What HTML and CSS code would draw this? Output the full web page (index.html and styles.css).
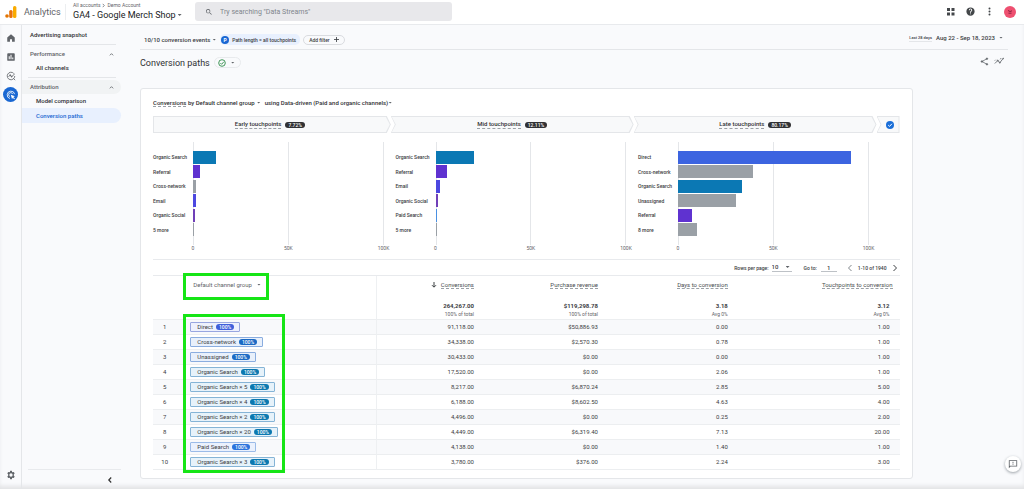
FILE: index.html
```html
<!DOCTYPE html>
<html lang="en">
<head>
<meta charset="utf-8">
<meta name="viewport" content="width=device-width, initial-scale=1">
<title>Analytics - Conversion paths</title>
<link rel="stylesheet" href="styles.css">
</head>
<body>
<header class="topbar">
  <a class="brand" href="#">
    <svg class="logo" viewBox="0 0 12 12" aria-hidden="true"><rect x="8" y="0" width="3.4" height="12" rx="1.6" fill="#f9ab00"/><rect x="4.2" y="4" width="3.4" height="8" rx="1.6" fill="#e8710a"/><circle cx="2" cy="10" r="1.8" fill="#e37400"/></svg>
    <span>Analytics</span>
  </a>
  <div class="account">
    <nav class="crumbs" aria-label="Account"><a href="#">All accounts</a><svg class="crumb-arrow" viewBox="0 0 4 6" aria-hidden="true"><path d="M1 .8 3 3 1 5.2"/></svg><a href="#">Demo Account</a></nav>
    <button class="property" type="button">GA4 - Google Merch Shop<i class="caret"></i></button>
  </div>
  <label class="search">
    <svg class="icon-8" viewBox="0 0 24 24" aria-hidden="true"><path d="M15.500 14h-.8l-.3-.3A6.500 6.500 0 1 0 13.700 14.400l.3.3v.8l5 5 1.500-1.500zM9.500 14a4.500 4.500 0 1 1 0-9 4.500 4.500 0 0 1 0 9z"/></svg>
    <input type="search" placeholder="Try searching &quot;Data Streams&quot;" aria-label="Search">
  </label>
  <div class="top-actions">
    <button type="button" aria-label="Apps"><svg class="icon-9" viewBox="0 0 9 9"><path d="M1 1h3v3H1zM5.500 1h3v3h-3zM1 5.500h3v3H1zM5.500 5.500h3v3h-3z"/></svg></button>
    <button type="button" aria-label="Help"><svg class="icon-9" viewBox="0 0 24 24"><path d="M12 1a11 11 0 1 0 0 22 11 11 0 0 0 0-22zm1.200 18.500h-2.400V17h2.400zm2.300-8.600-1 1c-.9.9-1.300 1.500-1.300 3.200h-2.400v-.6c0-1.300.5-2.400 1.300-3.200l1.400-1.400c.4-.4.6-.9.6-1.500a2.100 2.100 0 0 0-4.200 0H7.500a4.500 4.500 0 0 1 9 0c0 1-.4 1.900-1 2.500z"/></svg></button>
    <button type="button" aria-label="More"><svg class="icon-9" viewBox="0 0 9 9"><circle cx="4.500" cy="1.500" r="1"/><circle cx="4.500" cy="4.500" r="1"/><circle cx="4.500" cy="7.500" r="1"/></svg></button>
    <button class="avatar" type="button" aria-label="Profile"><svg viewBox="0 0 12 12"><path d="M4 4.500 6 5.500l2-.7M4.500 7.200h3" fill="none" stroke="#8c2340" stroke-width="1"/></svg></button>
  </div>
</header>

<div class="shell">
  <nav class="rail" aria-label="Sections">
    <a href="#" aria-label="Home"><svg class="icon-10" viewBox="0 0 24 24"><path d="M3 10.500 12 3l9 7.500V21h-6.500v-6h-5v6H3z"/></svg></a>
    <a href="#" aria-label="Reports"><svg class="icon-10" viewBox="0 0 24 24"><path fill-rule="evenodd" d="M5 3h14a2 2 0 0 1 2 2v14a2 2 0 0 1-2 2H5a2 2 0 0 1-2-2V5a2 2 0 0 1 2-2zm1.500 7v7.500H9V10zm4.200-3.500v11h2.600v-11zM15 13v4.500h2.500V13z"/></svg></a>
    <a href="#" aria-label="Explore"><svg class="icon-10 line" viewBox="0 0 24 24"><path d="M21 12a9 9 0 1 1-2.500-6.200M18 18l4 4M6 14l4-4 3.500 3.500L21 7"/><circle cx="10" cy="10" r="1.200"/><circle cx="13.500" cy="13.500" r="1.200"/></svg></a>
    <a class="active" href="#" aria-label="Advertising"><svg class="icon-10 line" viewBox="0 0 24 24"><path d="M9.500 20.500A9 9 0 1 1 20.700 10M9.500 16A5 5 0 1 1 16 9.500"/><path d="m11.500 11.500 10 3.500-4 1.800 4 4-1.500 1.500-4-4L14.500 22z" fill="currentColor" stroke="none"/></svg></a>
    <a class="settings" href="#" aria-label="Admin"><svg class="icon-10" viewBox="0 0 24 24"><path fill-rule="evenodd" d="m10 2-.6 2.700-1.600.9L5.200 4.700l-2 3.500 2 1.900v1.900 1.900l-2 1.900 2 3.500 2.600-.9 1.600.9L10 22h4l.6-2.700 1.600-.9 2.600.9 2-3.500-2-1.900v-3.800l2-1.900-2-3.500-2.600.9-1.600-.9L14 2zm2 6a4 4 0 1 1 0 8 4 4 0 0 1 0-8z"/></svg></a>
  </nav>

  <nav class="sidebar" aria-label="Advertising">
    <a class="side-item top" href="#">Advertising snapshot</a>
    <div class="side-group">
      <button class="side-head" type="button">Performance<svg class="icon-5 line" viewBox="0 0 6 6"><path d="m1 4 2-2 2 2"/></svg></button>
      <a class="side-item" href="#">All channels</a>
    </div>
    <div class="side-group">
      <button class="side-head shaded" type="button">Attribution<svg class="icon-5 line" viewBox="0 0 6 6"><path d="m1 4 2-2 2 2"/></svg></button>
      <a class="side-item" href="#">Model comparison</a>
      <a class="side-item current" href="#">Conversion paths</a>
    </div>
    <button class="collapse" type="button" aria-label="Collapse"><svg class="icon-8" viewBox="0 0 8 8"><path d="M5.200 1.500 2.800 4l2.400 2.500" fill="none" stroke="#333" stroke-width="1.200"/></svg></button>
  </nav>

  <main class="main">
    <div class="filters">
      <button class="plain" type="button">10/10 conversion events<i class="caret"></i></button>
      <button class="filter-chip" type="button"><b class="dot">P</b>Path length = all touchpoints</button>
      <button class="add-filter" type="button">Add filter<svg class="icon-5 line" viewBox="0 0 6 6"><path d="M3 0v6M0 3h6"/></svg></button>
      <button class="dates" type="button"><span class="range">Last 28 days</span>Aug 22 - Sep 18, 2023<i class="caret"></i></button>
    </div>
    <div class="title-row">
      <h1>Conversion paths</h1>
      <button class="status" type="button" aria-label="Data quality"><svg class="icon-8" viewBox="0 0 8 8"><circle cx="4" cy="4" r="3.300" fill="none" stroke="#2e8b47" stroke-width=".9"/><path d="m2.400 4.100 1.200 1.200 2.200-2.500" fill="none" stroke="#2e8b47" stroke-width=".9"/></svg><i class="caret"></i></button>
      <div class="title-actions">
        <button type="button" aria-label="Share"><svg class="icon-9 line" viewBox="0 0 24 24"><path d="M18 5 5 12l13 7"/><circle cx="18.500" cy="4.500" r="2" fill="currentColor"/><circle cx="5" cy="12" r="2" fill="currentColor"/><circle cx="18.500" cy="19.500" r="2" fill="currentColor"/></svg></button>
        <button type="button" aria-label="Insights"><svg class="icon-10 line" viewBox="0 0 24 24"><path d="m2 18 7-7 5 5 8-10M2 11l2-2M15 8l2-3"/><circle cx="9" cy="11" r="1.300"/><circle cx="14" cy="16" r="1.300"/><circle cx="22" cy="6" r="1"/></svg></button>
      </div>
    </div>

    <section class="card">
      <div class="card-title">
        <p><span class="dotted">Conversions</span> by Default channel group</p><i class="caret"></i>
        <p class="model">using Data-driven (Paid and organic channels)</p><i class="caret"></i>
      </div>

      <div class="steps">
        <div class="step first"><span class="dotted">Early touchpoints</span><b class="share">7.72%</b></div>
        <div class="step"><span class="dotted">Mid touchpoints</span><b class="share">12.11%</b></div>
        <div class="step"><span class="dotted">Late touchpoints</span><b class="share">80.17%</b></div>
        <div class="step last"><svg class="icon-8" viewBox="0 0 8 8" role="img" aria-label="Conversion"><circle cx="4" cy="4" r="4" fill="#1b6fd8"/><path d="m2.200 4.100 1.300 1.300 2.400-2.600" fill="none" stroke="#fff"/></svg></div>
      </div>

      <div class="charts">
        <div class="chart">
          <ul class="names"><li>Organic Search</li><li>Referral</li><li>Cross-network</li><li>Email</li><li>Organic Social</li><li>5 more</li></ul>
          <div class="plot"><i class="bar organic" style="width:12.3%"></i><i class="bar referral" style="width:3.5%"></i><i class="bar other" style="width:1.6%"></i><i class="bar email" style="width:1.4%"></i><i class="bar social" style="width:1%"></i><i class="bar other" style="width:.6%"></i></div>
          <div class="axis"><span>0</span><span>50K</span><span>100K</span></div>
        </div>
        <div class="chart">
          <ul class="names"><li>Organic Search</li><li>Referral</li><li>Email</li><li>Organic Social</li><li>Paid Search</li><li>5 more</li></ul>
          <div class="plot"><i class="bar organic" style="width:20.2%"></i><i class="bar referral" style="width:6%"></i><i class="bar email" style="width:2.4%"></i><i class="bar social" style="width:1.4%"></i><i class="bar paid" style="width:.9%"></i><i class="bar other" style="width:1%"></i></div>
          <div class="axis"><span>0</span><span>50K</span><span>100K</span></div>
        </div>
        <div class="chart">
          <ul class="names"><li>Direct</li><li>Cross-network</li><li>Organic Search</li><li>Unassigned</li><li>Referral</li><li>8 more</li></ul>
          <div class="plot"><i class="bar direct" style="width:91%"></i><i class="bar other" style="width:39.2%"></i><i class="bar organic" style="width:33.7%"></i><i class="bar other" style="width:30.5%"></i><i class="bar referral" style="width:7.3%"></i><i class="bar other" style="width:10.1%"></i></div>
          <div class="axis"><span>0</span><span>50K</span><span>100K</span></div>
        </div>
      </div>

      <div class="pager">
        <label for="rows">Rows per page:</label>
        <span class="select"><select id="rows"><option>10</option><option>25</option></select><i class="caret"></i></span>
        <label class="goto" for="page">Go to:</label>
        <input id="page" type="text" value="1">
        <button type="button" class="prev" aria-label="Previous page"><svg class="icon-8" viewBox="0 0 8 8"><path d="M5.500 1 2.500 4l3 3"/></svg></button>
        <span class="count">1-10 of 1940</span>
        <button type="button" class="next" aria-label="Next page"><svg class="icon-8" viewBox="0 0 8 8"><path d="m2.500 1 3 3-3 3"/></svg></button>
      </div>

      <div class="table-wrap">
        <table>
          <colgroup><col class="c-num"><col class="c-group"><col class="c-conv"><col class="c-rev"><col class="c-days"><col class="c-touch"></colgroup>
          <thead>
            <tr class="labels"><th></th><th class="group"><button class="dimension" type="button">Default channel group<i class="caret"></i></button></th><th><svg class="sort" viewBox="0 0 6 6" aria-hidden="true"><path d="M3 0v5M1 3.200l2 2 2-2"/></svg><span class="dotted">Conversions</span></th><th><span class="dotted">Purchase revenue</span></th><th><span class="dotted">Days to conversion</span></th><th><span class="dotted">Touchpoints to conversion</span></th></tr>
            <tr class="totals"><td></td><td class="group"></td><td><b>264,267.00</b><small>100% of total</small></td><td><b>$119,298.78</b><small>100% of total</small></td><td><b>3.18</b><small>Avg 0%</small></td><td><b>3.12</b><small>Avg 0%</small></td></tr>
          </thead>
          <tbody>
            <tr><td>1</td><td class="group"><span class="path direct">Direct<b>100%</b></span></td><td>91,118.00</td><td>$50,886.93</td><td>0.00</td><td>1.00</td></tr>
            <tr><td>2</td><td class="group"><span class="path cross">Cross-network<b>100%</b></span></td><td>34,338.00</td><td>$2,570.30</td><td>0.78</td><td>1.00</td></tr>
            <tr><td>3</td><td class="group"><span class="path cross">Unassigned<b>100%</b></span></td><td>30,433.00</td><td>$0.00</td><td>0.00</td><td>1.00</td></tr>
            <tr><td>4</td><td class="group"><span class="path">Organic Search<b>100%</b></span></td><td>17,520.00</td><td>$0.00</td><td>2.06</td><td>1.00</td></tr>
            <tr><td>5</td><td class="group"><span class="path">Organic Search × 5<b>100%</b></span></td><td>8,217.00</td><td>$6,870.24</td><td>2.85</td><td>5.00</td></tr>
            <tr><td>6</td><td class="group"><span class="path">Organic Search × 4<b>100%</b></span></td><td>6,188.00</td><td>$8,602.50</td><td>4.63</td><td>4.00</td></tr>
            <tr><td>7</td><td class="group"><span class="path">Organic Search × 2<b>100%</b></span></td><td>4,496.00</td><td>$0.00</td><td>0.25</td><td>2.00</td></tr>
            <tr><td>8</td><td class="group"><span class="path">Organic Search × 20<b>100%</b></span></td><td>4,449.00</td><td>$6,319.40</td><td>7.13</td><td>20.00</td></tr>
            <tr><td>9</td><td class="group"><span class="path paid">Paid Search<b>100%</b></span></td><td>4,138.00</td><td>$0.00</td><td>1.40</td><td>1.00</td></tr>
            <tr><td>10</td><td class="group"><span class="path">Organic Search × 3<b>100%</b></span></td><td>3,780.00</td><td>$376.00</td><td>2.24</td><td>3.00</td></tr>
          </tbody>
        </table>
        <div class="highlight highlight-dimension"></div>
        <div class="highlight highlight-paths"></div>
      </div>
    </section>
  </main>
</div>
<button class="feedback" type="button" aria-label="Send feedback"><svg class="icon-10" viewBox="0 0 24 24"><path fill-rule="evenodd" d="M2 3h20v15H6l-4 4zm2 2v12l1-1h15V5zM11 6.500h2V11h-2zM11 12.500h2v2h-2z"/></svg></button>
</body>
</html>
```
FILE: styles.css
```css
* { box-sizing: border-box; }
body {
  margin: 0;
  min-height: 100vh;
  display: flex;
  flex-direction: column;
  background: #f9fafc;
  box-shadow: inset 0 -4px 4px -1px #e2e3e5;
  color: #3c4043;
  font: 500 6px/8px Roboto, "Liberation Sans", sans-serif;
}
button, input, select { font: inherit; color: inherit; border: 0; background: none; padding: 0; margin: 0; }
button { display: inline-flex; align-items: center; cursor: pointer; }
a { color: inherit; text-decoration: none; }
svg { display: block; flex: none; fill: currentColor; }
ul, p, h1 { margin: 0; padding: 0; list-style: none; font-weight: inherit; }
.line { fill: none; stroke: currentColor; stroke-width: 2; }
.icon-5 { width: 5px; height: 5px; }
.icon-5.line { stroke-width: 1; }
.icon-8 { width: 8px; height: 8px; }
.icon-9 { width: 9px; height: 9px; }
.icon-10 { width: 10px; height: 10px; }
.caret { width: 4px; height: 2px; flex: none; background: #5f6368; clip-path: polygon(0 0, 100% 0, 50% 100%); }
.dotted { border-bottom: 1px dashed #9aa0a6; }

/* Top bar */
.topbar { display: flex; align-items: center; height: 25px; background: #fff; border-bottom: 1px solid #e8eaed; padding: 0 8px 1px 5px; }
.brand { display: flex; align-items: center; gap: 7px; width: 61px; height: 16px; border-right: 1px solid #eceef0; font: 400 9px/12px Roboto, sans-serif; color: #5f6368; }
.logo { width: 12px; height: 12px; }
.account { width: 129px; padding-left: 7px; }
.crumbs { display: flex; align-items: center; gap: 2px; font: 400 5px/7px Roboto, sans-serif; color: #5f6368; }
.crumb-arrow { width: 3px; height: 5px; fill: none; stroke: #5f6368; }
.property { gap: 2px; font: 400 9px/12px Roboto, sans-serif; color: #202124; white-space: nowrap; }
.search { display: flex; align-items: center; gap: 7px; width: 257px; height: 19px; padding: 0 10px; border-radius: 3px; background: #e8e8eb; color: #5f6368; }
.search input { flex: 1; min-width: 0; outline: 0; font: 400 7px/10px Roboto, sans-serif; }
.search input::placeholder { color: #80868b; opacity: 1; }
.top-actions { display: flex; align-items: center; gap: 10px; margin-left: auto; color: #44474a; }
.top-actions button:first-child { margin-right: 1px; }
.avatar { width: 12px; height: 12px; border-radius: 50%; background: #ee5070; }

/* Shell */
.shell { flex: 1; display: grid; grid-template-columns: 22px 99px minmax(0, 1fr); }
.rail { display: flex; flex-direction: column; align-items: center; gap: 4px; padding: 5px 0 7px; border-right: 1px solid #e4e6e9; color: #5f6368; }
.rail a { display: grid; place-items: center; width: 15px; height: 15px; border-radius: 50%; }
.rail .active { background: #1967d2; color: #fff; }
.rail .settings { margin-top: auto; }
.sidebar { display: flex; flex-direction: column; padding-top: 3px; }
.side-item { display: flex; align-items: center; height: 14px; padding-left: 14px; border-radius: 0 8px 8px 0; color: #303134; }
.side-item.top { padding-left: 8px; }
.side-item.current { height: 15px; background: #e8f0fe; color: #1967d2; }
.side-group { padding-top: 2px; }
.side-group::before { content: ""; display: block; height: 1px; margin: 0 5px 2px 6px; background: #e4e6e9; }
.side-head { width: 100%; height: 14px; padding: 0 7px 0 8px; justify-content: space-between; color: #5f6368; border-radius: 0 8px 8px 0; }
.side-head.shaded { background: #f1f3f4; }
.collapse { margin: auto 0 0 6px; height: 20px; border-top: 1px solid #e8eaed; justify-content: flex-end; padding-right: 7px; }

/* Main column */
.main { padding: 0 16px 9px 19px; }
.filters { display: flex; align-items: center; height: 25px; padding: 5px 5px 0 4px; border-bottom: 1px solid #e4e6e9; }
.plain { gap: 2px; }
.filter-chip { gap: 3px; height: 11px; margin-left: 4px; padding: 0 4px 0 1px; border-radius: 5px; background: #e8f0fe; font-size: 5px; }
.dot { display: grid; place-items: center; width: 8px; height: 8px; border-radius: 50%; background: #1967d2; color: #fff; font-size: 5px; line-height: 8px; }
.add-filter { gap: 4px; height: 10px; margin-left: 3px; padding: 0 5px; border: 1px solid #dadce0; border-radius: 5px; font-size: 5px; }
.dates { gap: 4px; margin: 0 0 4px auto; }
.range { font-size: 4px; line-height: 7px; border-bottom: 1px solid #e4e6e9; }
.title-row { display: flex; align-items: center; height: 25px; }
.title-row h1 { font: 400 9px/12px Roboto, sans-serif; color: #303134; }
.status { gap: 5px; height: 11px; margin-left: 4px; padding: 0 5px 0 3px; border: 1px solid #e8eaed; border-radius: 6px; }
.title-actions { display: flex; gap: 5px; margin: 0 4px 3px auto; color: #5f6368; }

/* Card */
.card { width: 89%; margin-top: 13px; padding: 9px 12px 8px; border: 1px solid #e4e6e9; border-radius: 3px; background: #fff; }
.card-title { display: flex; align-items: center; height: 9px; color: #303134; }
.card-title .caret { margin-left: 2px; }
.card-title .model { margin-left: 4px; }
.card-title .model + .caret { margin-left: 0; }
.steps { display: grid; grid-template-columns: 238fr 243fr 243fr 23px; margin-top: 9px; }
.step { position: relative; z-index: 0; display: flex; align-items: center; justify-content: center; gap: 4px; height: 17px; background: #e4e6e9; --shape: polygon(0 0, calc(100% - 4px) 0, 100% 50%, calc(100% - 4px) 100%, 0 100%, 4px 50%); clip-path: var(--shape); color: #303134; }
.step::before { content: ""; position: absolute; inset: 1px; z-index: -1; background: #f8f9fa; clip-path: var(--shape); }
.step.first { --shape: polygon(0 0, calc(100% - 4px) 0, 100% 50%, calc(100% - 4px) 100%, 0 100%); padding-right: 4px; }
.step.last { --shape: polygon(0 0, 100% 0, 100% 100%, 0 100%, 4px 50%); padding-left: 3px; }
.share { padding: 0 3px; border-radius: 3px; background: #303134; color: #fff; font: 500 5px/6px Roboto, sans-serif; }

/* Charts */
.charts { display: grid; grid-template-columns: repeat(3, 1fr); margin: 9px 19px 0 0; }
.chart { display: grid; grid-template-columns: 40px 1fr; padding-right: 12px; }
.names, .plot { display: grid; grid-template-rows: repeat(6, 1fr); align-items: center; height: 103px; padding: 8px 0; }
.names { font-size: 5px; white-space: nowrap; }
.plot { background: linear-gradient(#e4e6e9, #e4e6e9) 0 0 / 1px 100% no-repeat, linear-gradient(#e4e6e9, #e4e6e9) 50% 0 / 1px 100% no-repeat, linear-gradient(#e4e6e9, #e4e6e9) 100% 0 / 1px 100% no-repeat; }
.bar { height: 13px; }
.bar.organic { background: #0b78b4; }
.bar.referral { background: #5f32d0; }
.bar.other { background: #9aa0a6; }
.bar.email { background: #4c48e0; }
.bar.social { background: #7040b8; }
.bar.paid { background: #4a90e2; }
.bar.direct { background: #3c64e0; }
.axis { grid-column: 2; display: flex; justify-content: space-between; font: 400 5px/6px Roboto, sans-serif; color: #5f6368; }
.axis span { display: flex; justify-content: center; width: 0; }

/* Pager */
.pager { display: flex; align-items: center; height: 17px; margin-top: 8px; border: solid #e8eaed; border-width: 1px 0; font-size: 5px; padding-right: 1px; }
.pager label { margin-left: auto; }
.pager .goto { margin-left: 12px; }
.select { display: flex; align-items: center; width: 20px; margin-left: 3px; border-bottom: 1px solid #bdc1c6; font-size: 6px; }
.select select { flex: 1; min-width: 0; appearance: none; outline: 0; }
.select .caret { margin-right: 2px; }
.pager input { width: 16px; height: 9px; margin-left: 4px; border-bottom: 1px solid #bdc1c6; text-align: center; font-size: 6px; }
.pager svg { fill: none; stroke: currentColor; }
.prev { margin-left: 9px; color: #80868b; }
.count { margin: 0 4px; }

/* Table */
.table-wrap { position: relative; }
table { width: 100%; table-layout: fixed; border-collapse: separate; border-spacing: 0; }
.c-num { width: 5%; }
.c-group { width: 25%; }
.c-conv { width: 13%; }
.c-rev { width: 16.6%; }
.c-days { width: 17.4%; }
.c-touch { width: 23%; }
th, td { padding: 0; height: 15px; text-align: right; font-weight: 400; }
td { border-bottom: 1px solid #eceef0; }
td:first-child { text-align: center; padding-right: 14px; }
td:last-child { padding-right: 10px; }
th:last-child { padding-right: 7px; }
.group { text-align: left; border-right: 1px solid #eef0f2; }
tbody tr:nth-child(odd) { background: #f8f9fb; }
.labels th { height: 17px; color: #4a4e52; }
.labels .group { padding-left: 3px; color: #5f6368; }
.dimension { gap: 5px; }
.sort { display: inline-block; width: 6px; height: 6px; margin-right: 4px; vertical-align: middle; fill: none; stroke: #3c4043; }
.totals td { height: 27px; padding-top: 8px; line-height: 9px; }
.totals b { display: block; font-weight: 700; }
.totals small { display: block; font-size: 5px; color: #5f6368; }
.path { display: inline-flex; align-items: center; gap: 3px; height: 10px; padding: 0 5px 0 6px; border: 1px solid #85b4d6; border-radius: 1px; background: #e6f2fa; vertical-align: middle; white-space: nowrap; }
.path b { padding: 0 3px; border-radius: 3px; background: #0b78b0; color: #fff; font: 500 5px/6px Roboto, sans-serif; }
.path.direct { background: #eef1fd; border-color: #98a6e0; }
.path.direct b { background: #405fda; }
.path.cross { background: #e8f0fb; border-color: #8aaddf; }
.path.cross b { background: #1b6ac4; }
.path.paid { background: #eaf1fd; border-color: #9bbbe8; }
.path.paid b { background: #2a73dc; }
.highlight { position: absolute; left: 30px; border: 3px solid #16e516; pointer-events: none; }
.highlight-dimension { top: -3px; width: 86px; height: 27px; }
.highlight-paths { top: 38px; width: 102px; height: 159px; }

.feedback { position: fixed; right: 3px; bottom: 17px; width: 16px; height: 16px; justify-content: center; border-radius: 50%; background: #fff; color: #5f6368; box-shadow: 0 1px 3px #9aa0a6; }
```
